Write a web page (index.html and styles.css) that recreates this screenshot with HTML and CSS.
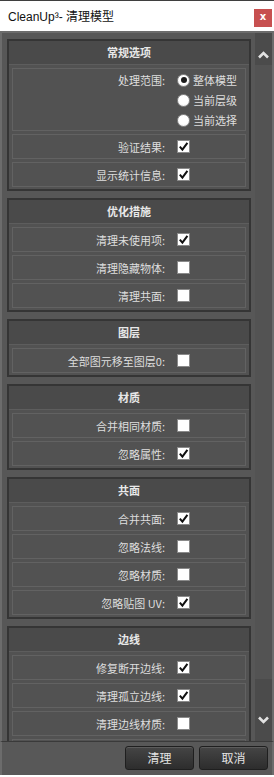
FILE: index.html
```html
<!DOCTYPE html>
<html lang="zh">
<head>
  <meta charset="UTF-8" />
  <meta name="viewport" content="width=device-width, initial-scale=1.0" />
  <title>CleanUp³- 清理模型</title>
  <link rel="stylesheet" href="styles.css">
</head>
<body>
  <div class="window">
    <div class="titlebar">
      <span class="title">CleanUp³- 清理模型</span>
      <div class="close">x</div>
    </div>

    <div class="client">
      <div class="scroll-area">

        <div class="section">
          <div class="section-head">常规选项</div>
          <div class="section-body">
            <div class="row row-radio">
              <div class="label">处理范围:</div>
              <div class="radios">
                <div class="radio-item"><span class="radio on"></span>整体模型</div>
                <div class="radio-item"><span class="radio"></span>当前层级</div>
                <div class="radio-item"><span class="radio"></span>当前选择</div>
              </div>
            </div>
            <div class="row"><div class="label">验证结果:</div><span class="check on"></span></div>
            <div class="row"><div class="label">显示统计信息:</div><span class="check on"></span></div>
          </div>
        </div>

        <div class="section">
          <div class="section-head">优化措施</div>
          <div class="section-body">
            <div class="row"><div class="label">清理未使用项:</div><span class="check on"></span></div>
            <div class="row"><div class="label">清理隐藏物体:</div><span class="check"></span></div>
            <div class="row"><div class="label">清理共面:</div><span class="check"></span></div>
          </div>
        </div>

        <div class="section">
          <div class="section-head">图层</div>
          <div class="section-body">
            <div class="row"><div class="label">全部图元移至图层0:</div><span class="check"></span></div>
          </div>
        </div>

        <div class="section">
          <div class="section-head">材质</div>
          <div class="section-body">
            <div class="row"><div class="label">合并相同材质:</div><span class="check"></span></div>
            <div class="row"><div class="label">忽略属性:</div><span class="check on"></span></div>
          </div>
        </div>

        <div class="section">
          <div class="section-head">共面</div>
          <div class="section-body">
            <div class="row"><div class="label">合并共面:</div><span class="check on"></span></div>
            <div class="row"><div class="label">忽略法线:</div><span class="check"></span></div>
            <div class="row"><div class="label">忽略材质:</div><span class="check"></span></div>
            <div class="row"><div class="label">忽略贴图 UV:</div><span class="check on"></span></div>
          </div>
        </div>

        <div class="section">
          <div class="section-head">边线</div>
          <div class="section-body">
            <div class="row"><div class="label">修复断开边线:</div><span class="check on"></span></div>
            <div class="row"><div class="label">清理孤立边线:</div><span class="check on"></span></div>
            <div class="row"><div class="label">清理边线材质:</div><span class="check"></span></div>
            <!-- next row is scrolled out of view -->
            <div class="row"></div>
          </div>
        </div>

      </div>

      <div class="scrollbar">
        <div class="sb-up">
          <svg width="11" height="8" viewBox="0 0 11 8"><path d="M1 6.5 L5.5 2 L10 6.5" fill="none" stroke="#e2e2e2" stroke-width="2.6"/></svg>
        </div>
        <div class="sb-thumb"></div>
        <div class="sb-down">
          <svg width="11" height="8" viewBox="0 0 11 8"><path d="M1 1.5 L5.5 6 L10 1.5" fill="none" stroke="#e2e2e2" stroke-width="2.6"/></svg>
        </div>
      </div>
    </div>

    <div class="footer">
      <button class="btn">清理</button>
      <button class="btn">取消</button>
    </div>
  </div>

  <script>
    // check marks are drawn into every checked box
    const tick = '<svg width="11" height="11" viewBox="0 0 11 11"><path d="M1.8 5.6 L4.4 8.6 L9.4 1.8" fill="none" stroke="#111" stroke-width="2"/></svg>';
    document.querySelectorAll('.check.on').forEach((el) => {
      el.innerHTML = tick;
    });
  </script>
</body>
</html>
```

FILE: styles.css
```css
:root {
  --page-bg: #575757;
  --section-bg: #525252;
  --head-bg: #4a4a4a;
  --edge: #6c6c6c;
  --text: #dedede;
}

* {
  box-sizing: border-box;
  margin: 0;
  padding: 0;
  font-family: 'Noto Sans CJK SC', 'Liberation Sans', sans-serif;
}

body {
  background: #fff;
  width: 274px;
  height: 777px;
  overflow: hidden;
}

.window {
  width: 274px;
  height: 775px;
  display: flex;
  flex-direction: column;
}

.titlebar {
  height: 31px;
  background: #fff;
  border-top: 1px solid #3f3f3f;
  display: flex;
  justify-content: space-between;
  align-items: center;
  padding: 0 2px 0 8px;
}
.titlebar .title {
  font-family: 'Liberation Sans', 'Noto Sans CJK SC', sans-serif;
  font-size: 12px;
  color: #111;
  margin-top: -1px;
}
.titlebar .close {
  width: 18px;
  height: 18px;
  margin-top: 3px;
  background: #c75050;
  color: #fff;
  font-family: 'DejaVu Sans', sans-serif;
  font-size: 10px;
  font-weight: bold;
  line-height: 16px;
  text-align: center;
}

.client {
  height: 710px;
  display: flex;
  background: var(--page-bg);
  border-top: 2px solid var(--edge);
  border-left: 2px solid var(--edge);
  border-right: 2px solid var(--edge);
}

.scroll-area {
  flex: 1;
  overflow: hidden;
  padding: 6px 4px 0 5px;
}

.section {
  border: 2px solid #353535;
  background: var(--section-bg);
  margin-bottom: 7px;
}
.section-head {
  height: 24px;
  line-height: 23px;
  text-align: center;
  font-size: 11px;
  font-weight: bold;
  color: #e8e8e8;
  background: var(--head-bg);
  border-bottom: 1px solid #5d5d5d;
}
.section-body {
  display: flex;
  flex-direction: column;
  gap: 3px;
  padding: 3px 3px 2px;
}

.row {
  height: 25px;
  flex-shrink: 0;
  border: 1px solid #626262;
  display: flex;
  align-items: center;
}
.row .label {
  width: 152px;
  text-align: right;
  font-size: 11px;
  color: var(--text);
  margin-right: 12px;
  white-space: nowrap;
}

.row-radio {
  height: 63px;
  align-items: flex-start;
  padding-top: 1px;
}
.row-radio .label {
  line-height: 20px;
}
.radios {
  display: flex;
  flex-direction: column;
}
.radio-item {
  height: 20px;
  display: flex;
  align-items: center;
  gap: 3px;
  font-size: 11px;
  color: var(--text);
}
.radio {
  width: 13px;
  height: 13px;
  border-radius: 50%;
  background: radial-gradient(circle at 50% 40%, #fff 55%, #d8d8d8);
  border: 1px solid #8c8c8c;
  display: flex;
  align-items: center;
  justify-content: center;
}
.radio.on::after {
  content: '';
  width: 6px;
  height: 6px;
  border-radius: 50%;
  background: #1c1c1c;
}

.check {
  width: 13px;
  height: 13px;
  background: #fff;
  border: 1px solid #8a8a8a;
  display: flex;
  align-items: center;
  justify-content: center;
}

.scrollbar {
  width: 17px;
  display: flex;
  flex-direction: column;
  background: #4b4b4b;
}
.sb-up {
  height: 32px;
  display: flex;
  justify-content: center;
  align-items: flex-end;
  padding-bottom: 6px;
}
.sb-thumb {
  height: 614px;
  background: #535353;
}
.sb-down {
  flex: 1;
  display: flex;
  justify-content: center;
  padding-top: 37px;
}

.footer {
  height: 34px;
  background: #585858;
  border-top: 1px solid #3a3a3a;
  border-left: 2px solid var(--edge);
  border-right: 2px solid var(--edge);
  display: flex;
  justify-content: flex-end;
  gap: 5px;
  padding: 4px 4px 0 0;
}
.btn {
  width: 69px;
  height: 24px;
  border: 1px solid #1f1f1f;
  border-radius: 3px;
  background: linear-gradient(#454545, #2d2d2d);
  box-shadow: inset 0 1px 0 #5c5c5c;
  color: #e4e4e4;
  font-size: 12px;
  line-height: 20px;
}
```
